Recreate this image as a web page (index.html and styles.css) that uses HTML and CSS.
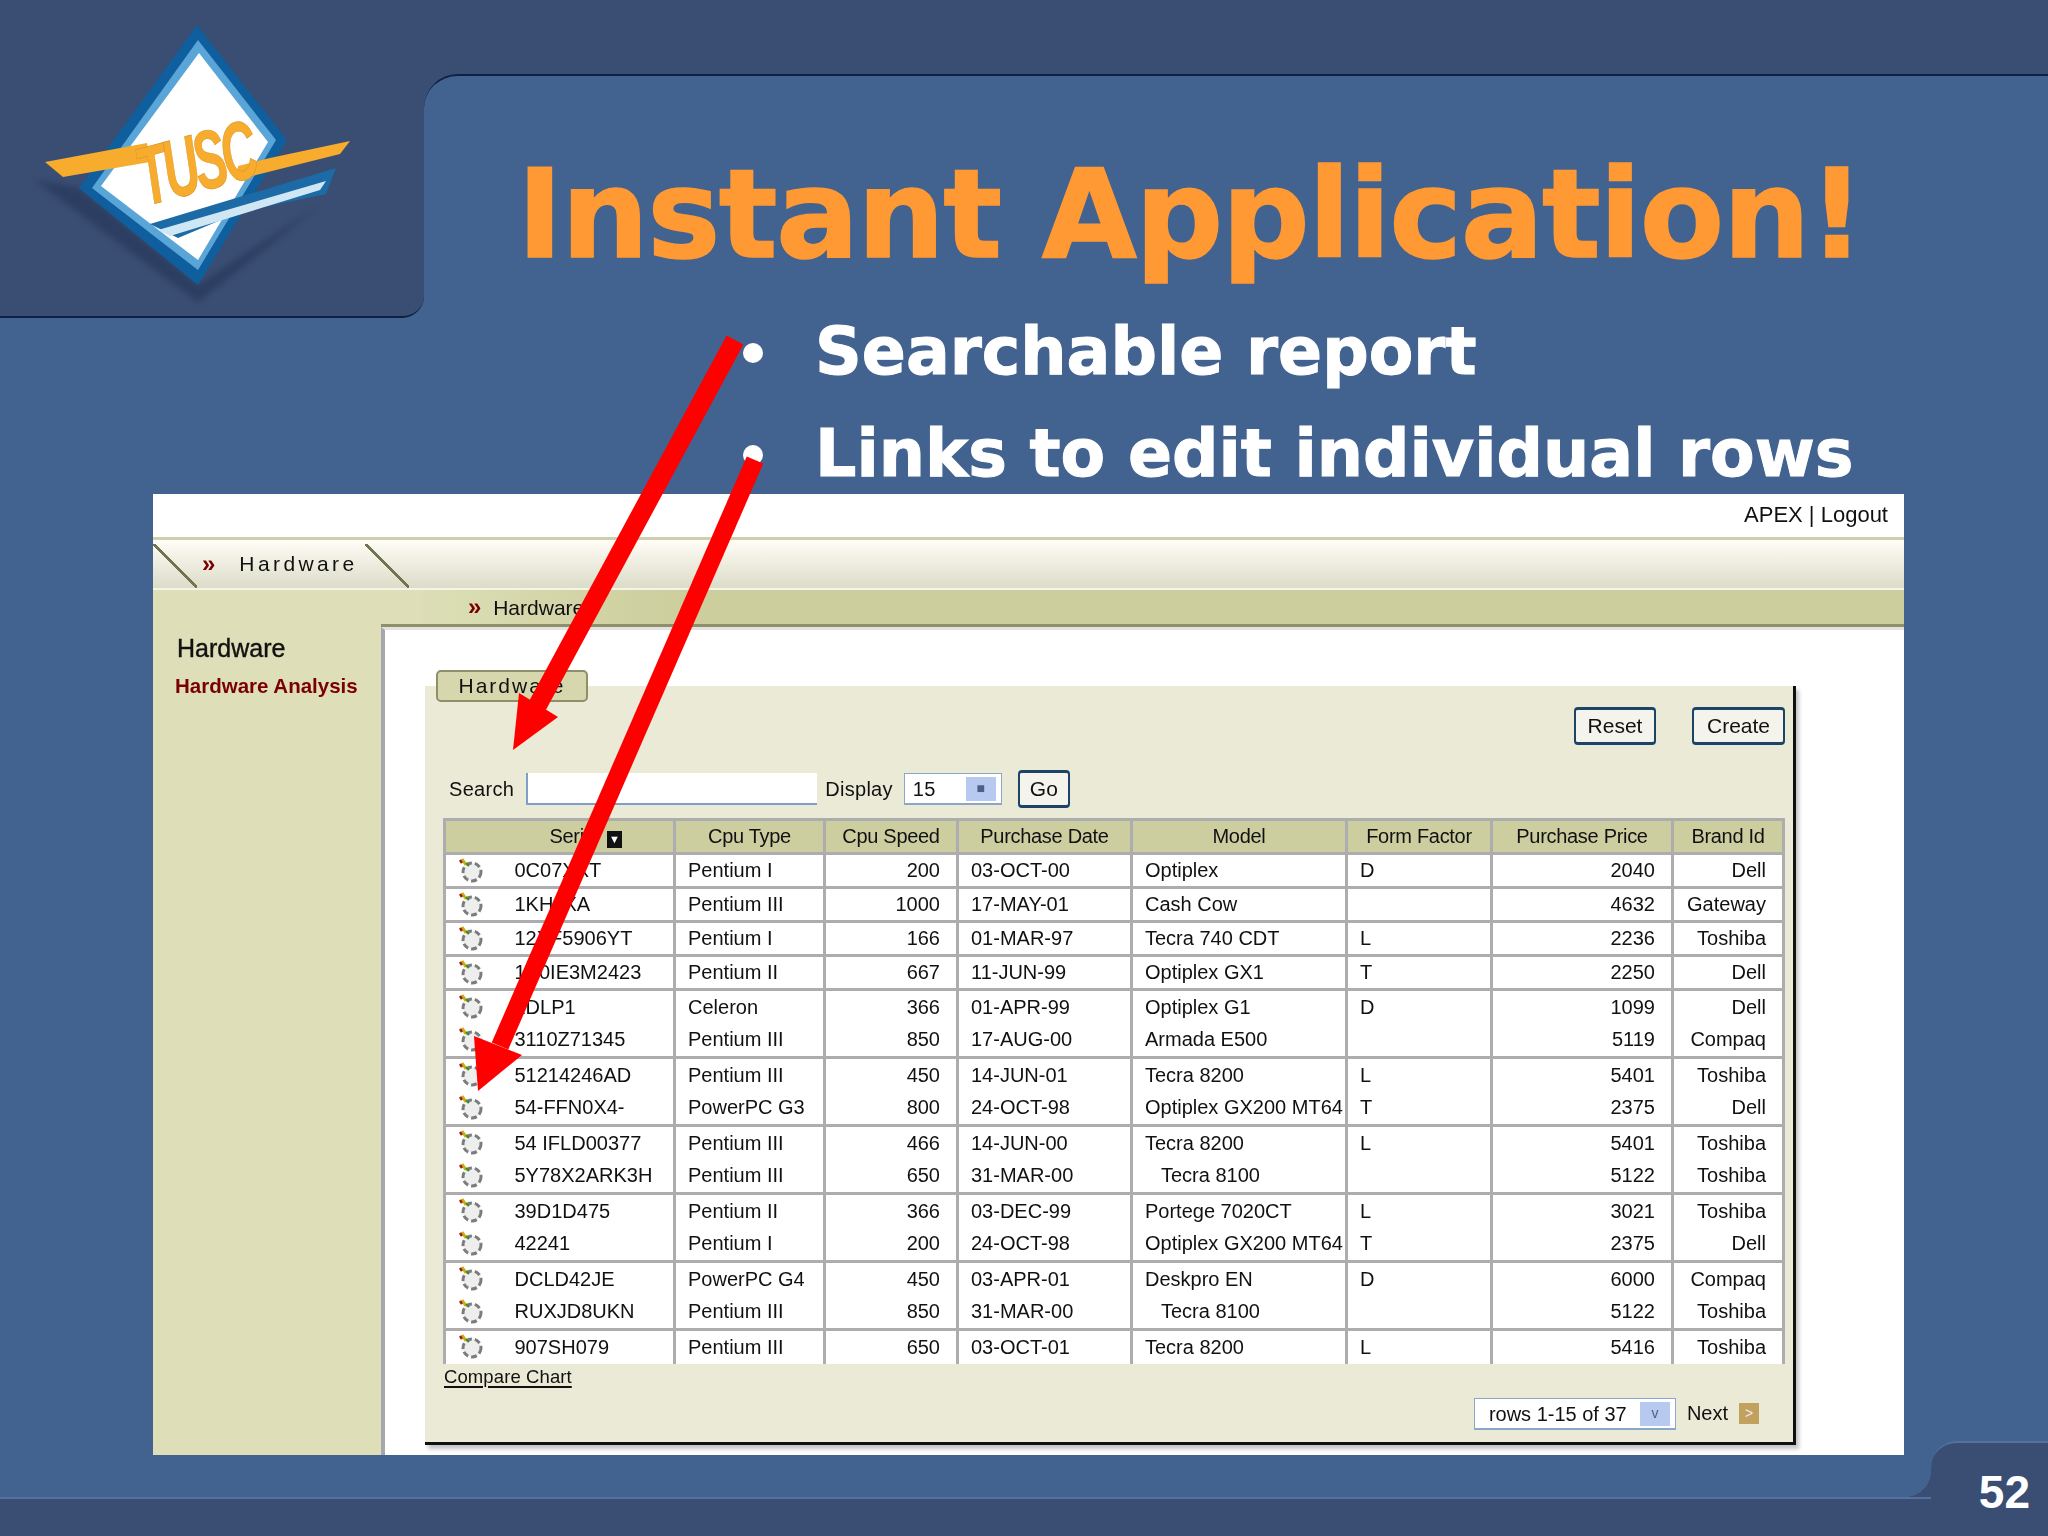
FILE: index.html
```html
<!DOCTYPE html>
<html>

<head>
    <title>Instant Application!</title>
    <link rel="stylesheet" href="styles.css">
</head>

<body>
    <svg class="defs" width="0" height="0">
        <symbol id="edit" viewBox="0 0 28 28">
            <circle cx="14" cy="15" r="9" fill="#eeeeee" stroke="#7c7c7c" stroke-width="3" stroke-dasharray="6 3" />
            <path d="M4 2l4 6" stroke="#c9b400" stroke-width="3" />
            <path d="M2 3l2 3" stroke="#a02020" stroke-width="2.5" />
            <path d="M8 6l3 3" stroke="#3c8a3c" stroke-width="2" />
        </symbol>
    </svg>

    <div class="slide">
        <header class="head">
            <div class="logo-tab">
                <svg class="logo" width="330" height="300" viewBox="30 10 330 300">
                    <path class="logo-shadow" d="M35 180L198 302 320 205 198 285 79 188z" fill="#26385a" />
                    <path d="M197 25L287 140 198 285 79 188z" fill="#0f5f9e" />
                    <path d="M198 40L276 140 198 270 92 188z" fill="#5aa5d8" />
                    <path d="M199 53L268 142 198 260 101 186z" fill="#fff" />
                    <path d="M150 224L336 168 326 194 240 212 178 238z" fill="#1c6aa6" />
                    <path d="M158 230L326 181 320 190 170 236z" fill="#cfe6f5" />
                    <path d="M45 162L147 143 150 162 63 177z" fill="#f7ac2d" />
                    <path d="M238 166L270 158 350 141 340 154 236 180z" fill="#f7ac2d" />
                    <text class="logo-text" transform="translate(146 206) rotate(-15) scale(.66 1.12)">TUSC</text>
                </svg>
            </div>
            <div class="head-right">
                <div class="title-panel">
                    <h1 class="title">Instant Application!</h1>
                </div>
            </div>
        </header>

        <ul class="points">
            <li>Searchable report</li>
            <li>Links to edit individual rows</li>
        </ul>

        <div class="app">
            <div class="app-user">APEX | Logout</div>
            <nav class="app-tabs">
                <span class="slash"></span>
                <span class="chev">&raquo;</span>
                <span class="app-tab">Hardware</span>
                <span class="slash"></span>
            </nav>
            <div class="app-body">
                <aside class="side">
                    <h3>Hardware</h3>
                    <a>Hardware Analysis</a>
                </aside>
                <div class="app-main">
                    <div class="crumb"><span class="chev">&raquo;</span> Hardware</div>
                    <div class="content">
                        <section class="panel">
                            <div class="panel-tab">Hardware</div>
                            <div class="actions">
                                <button class="btn">Reset</button>
                                <button class="btn btn-create">Create</button>
                            </div>
                            <div class="search">
                                <label>Search</label>
                                <span class="input"></span>
                                <label>Display</label>
                                <span class="select select-display">15<i class="drop">&#9632;</i></span>
                                <button class="btn btn-go">Go</button>
                            </div>
                            <table class="report">
                                <colgroup>
                                    <col class="c-icon">
                                    <col class="c-serial">
                                    <col class="c-type">
                                    <col class="c-speed">
                                    <col class="c-date">
                                    <col class="c-model">
                                    <col class="c-form">
                                    <col class="c-price">
                                    <col class="c-brand">
                                </colgroup>
                                <thead>
                                    <tr>
                                        <th colspan="2" class="serial-head">Serial <span class="sort">&#9660;</span></th>
                                        <th>Cpu Type</th>
                                        <th>Cpu Speed</th>
                                        <th>Purchase Date</th>
                                        <th>Model</th>
                                        <th>Form Factor</th>
                                        <th>Purchase Price</th>
                                        <th>Brand Id</th>
                                    </tr>
                                </thead>
                                <tbody>
                                    <tr><td><svg class="ico"><use href="#edit" /></svg></td><td>0C07XXT</td><td>Pentium I</td><td class="num">200</td><td>03-OCT-00</td><td>Optiplex</td><td>D</td><td class="num">2040</td><td class="num">Dell</td></tr>
                                    <tr><td><svg class="ico"><use href="#edit" /></svg></td><td>1KHJXA</td><td>Pentium III</td><td class="num">1000</td><td>17-MAY-01</td><td>Cash Cow</td><td></td><td class="num">4632</td><td class="num">Gateway</td></tr>
                                    <tr><td><svg class="ico"><use href="#edit" /></svg></td><td>12XF5906YT</td><td>Pentium I</td><td class="num">166</td><td>01-MAR-97</td><td>Tecra 740 CDT</td><td>L</td><td class="num">2236</td><td class="num">Toshiba</td></tr>
                                    <tr><td><svg class="ico"><use href="#edit" /></svg></td><td>1X0IE3M2423</td><td>Pentium II</td><td class="num">667</td><td>11-JUN-99</td><td>Optiplex GX1</td><td>T</td><td class="num">2250</td><td class="num">Dell</td></tr>
                                    <tr class="joined"><td><svg class="ico"><use href="#edit" /></svg></td><td>2DLP1</td><td>Celeron</td><td class="num">366</td><td>01-APR-99</td><td>Optiplex G1</td><td>D</td><td class="num">1099</td><td class="num">Dell</td></tr>
                                    <tr><td><svg class="ico"><use href="#edit" /></svg></td><td>3110Z71345</td><td>Pentium III</td><td class="num">850</td><td>17-AUG-00</td><td>Armada E500</td><td></td><td class="num">5119</td><td class="num">Compaq</td></tr>
                                    <tr class="joined"><td><svg class="ico"><use href="#edit" /></svg></td><td>51214246AD</td><td>Pentium III</td><td class="num">450</td><td>14-JUN-01</td><td>Tecra 8200</td><td>L</td><td class="num">5401</td><td class="num">Toshiba</td></tr>
                                    <tr><td><svg class="ico"><use href="#edit" /></svg></td><td>54-FFN0X4-</td><td>PowerPC G3</td><td class="num">800</td><td>24-OCT-98</td><td>Optiplex GX200 MT64</td><td>T</td><td class="num">2375</td><td class="num">Dell</td></tr>
                                    <tr class="joined"><td><svg class="ico"><use href="#edit" /></svg></td><td>54 IFLD00377</td><td>Pentium III</td><td class="num">466</td><td>14-JUN-00</td><td>Tecra 8200</td><td>L</td><td class="num">5401</td><td class="num">Toshiba</td></tr>
                                    <tr><td><svg class="ico"><use href="#edit" /></svg></td><td>5Y78X2ARK3H</td><td>Pentium III</td><td class="num">650</td><td>31-MAR-00</td><td class="indent">Tecra 8100</td><td></td><td class="num">5122</td><td class="num">Toshiba</td></tr>
                                    <tr class="joined"><td><svg class="ico"><use href="#edit" /></svg></td><td>39D1D475</td><td>Pentium II</td><td class="num">366</td><td>03-DEC-99</td><td>Portege 7020CT</td><td>L</td><td class="num">3021</td><td class="num">Toshiba</td></tr>
                                    <tr><td><svg class="ico"><use href="#edit" /></svg></td><td>42241</td><td>Pentium I</td><td class="num">200</td><td>24-OCT-98</td><td>Optiplex GX200 MT64</td><td>T</td><td class="num">2375</td><td class="num">Dell</td></tr>
                                    <tr class="joined"><td><svg class="ico"><use href="#edit" /></svg></td><td>DCLD42JE</td><td>PowerPC G4</td><td class="num">450</td><td>03-APR-01</td><td>Deskpro EN</td><td>D</td><td class="num">6000</td><td class="num">Compaq</td></tr>
                                    <tr><td><svg class="ico"><use href="#edit" /></svg></td><td>RUXJD8UKN</td><td>Pentium III</td><td class="num">850</td><td>31-MAR-00</td><td class="indent">Tecra 8100</td><td></td><td class="num">5122</td><td class="num">Toshiba</td></tr>
                                    <tr><td><svg class="ico"><use href="#edit" /></svg></td><td>907SH079</td><td>Pentium III</td><td class="num">650</td><td>03-OCT-01</td><td>Tecra 8200</td><td>L</td><td class="num">5416</td><td class="num">Toshiba</td></tr>
                                </tbody>
                            </table>
                            <a class="chart-link">Compare Chart</a>
                            <div class="pager">
                                <span class="select select-rows">rows 1-15 of 37<i class="drop">v</i></span>
                                <span class="next">Next</span>
                                <i class="next-ico">&gt;</i>
                            </div>
                        </section>
                    </div>
                </div>
            </div>
        </div>

        <footer class="foot">
            <div class="foot-left"></div>
            <div class="page-no">52</div>
        </footer>

        <!-- arrows lie over the slide text and the screenshot -->
        <svg class="arrows" width="2048" height="1536" viewBox="0 0 2048 1536">
            <path d="M735 340L534 712" stroke="#f00" stroke-width="19" />
            <path d="M513 750L558 717 519 693z" fill="#f00" />
            <path d="M755 460L500 1046" stroke="#f00" stroke-width="18" />
            <path d="M478 1091L522 1055 474 1036z" fill="#f00" />
        </svg>
    </div>
</body>

</html>
```

FILE: styles.css
```css
body {
    margin: 0;
    font-family: "DejaVu Sans", sans-serif;
    background: #426290;
}

.defs {
    display: block;
    height: 0;
}

.slide {
    position: relative;
    width: 2048px;
    height: 1536px;
    overflow: hidden;
    background-color: #426290;
}

.head {
    display: flex;
    height: 318px;
}

.logo-tab {
    flex: 0 0 424px;
    box-sizing: border-box;
    padding: 10px 0 0 30px;
    background-color: #3a4d72;
    border-bottom: 2px solid #0e2142;
    border-bottom-right-radius: 22px;
}

.logo {
    display: block;
}

.logo-shadow {
    opacity: .7;
    filter: blur(3px);
}

.logo-text {
    font-family: "Liberation Sans", sans-serif;
    font-size: 74px;
    font-style: italic;
    font-weight: bold;
    fill: #f7ac2d;
    stroke: #d8952a;
    stroke-width: .6;
    letter-spacing: -6px;
}

.head-right {
    flex: 1;
    background: linear-gradient(#3a4d72 110px, transparent 110px);
}

.title-panel {
    box-sizing: border-box;
    height: 244px;
    margin-top: 74px;
    padding: 77px 0 0 93px;
    background-color: #426290;
    border-top: 2px solid #0e2142;
    border-top-left-radius: 34px;
}

.title {
    margin: 0;
    font-size: 123px;
    line-height: 1;
    font-weight: bold;
    letter-spacing: -1.6px;
    color: #ff9933;
    -webkit-text-stroke: 1.5px #ff9933;
    white-space: nowrap;
}

.points {
    box-sizing: border-box;
    height: 193px;
    margin: -17px 0 0;
    padding: 0 0 0 815px;
    list-style: none;
    color: #fff;
    -webkit-text-stroke: 1px #fff;
    font-size: 65px;
    font-weight: bold;
    line-height: 102px;
}

.points li {
    position: relative;
    white-space: nowrap;
}

.points li::before {
    content: "";
    position: absolute;
    left: -72px;
    top: 42px;
    width: 20px;
    height: 20px;
    border-radius: 50%;
    background-color: #fff;
}

/* the screenshot inside the slide */
.app {
    box-sizing: border-box;
    width: 1751px;
    height: 961px;
    margin-left: 153px;
    background-color: #fff;
    color: #111;
    font-family: "Liberation Sans", sans-serif;
    font-size: 20px;
    filter: blur(.7px);
}

.app-user {
    height: 43px;
    line-height: 42px;
    padding-right: 16px;
    text-align: right;
    font-size: 22px;
}

.app-tabs {
    display: flex;
    align-items: center;
    height: 53px;
    border-top: 3px solid #cfcfae;
    box-sizing: border-box;
    background: linear-gradient(#fffdf6, #dcdcc9);
    border-bottom: 2px solid #f4f4e8;
}

.slash {
    width: 44px;
    height: 44px;
    margin-top: 4px;
    background: linear-gradient(to top right, transparent 48%, #6f7550 48%, #6f7550 53%, transparent 53%);
}

.chev {
    color: #7a0000;
    font-weight: bold;
    font-size: 24px;
}

.app-tabs .chev {
    margin: 0 24px 0 5px;
}

.app-tab {
    width: 126px;
    font-size: 21px;
    letter-spacing: 3.4px;
    white-space: nowrap;
}

.app-body {
    display: flex;
    height: 865px;
}

.side {
    flex: 0 0 228px;
    padding-top: 44px;
    background-color: #dedfb8;
}

.side h3 {
    margin: 0 0 12px 24px;
    font-size: 25px;
    font-weight: normal;
    line-height: 28px;
    -webkit-text-stroke: .4px #111;
}

.side a {
    display: block;
    margin-left: 22px;
    color: #7a0000;
    font-size: 20.5px;
    font-weight: bold;
    white-space: nowrap;
}

.app-main {
    flex: 1;
    min-width: 0;
    display: flex;
    flex-direction: column;
}

.crumb {
    box-sizing: border-box;
    height: 37px;
    padding-left: 87px;
    line-height: 34px;
    font-size: 21px;
    background: linear-gradient(90deg, #dedfb8 40px, #dcdeb5 42px, #ccce9e 300px);
    border-bottom: 3px solid #8f9068;
}

.crumb .chev {
    margin-right: 6px;
}

.content {
    flex: 1;
    padding: 56px 108px 10px 40px;
    border-left: 4px solid #a4a6b0;
    border-top: 3px solid #e2e2e2;
}

.panel {
    position: relative;
    box-sizing: border-box;
    height: 759px;
    padding: 0 12px 0 20px;
    background-color: #eaead6;
    border-right: 3px solid #111;
    border-bottom: 3px solid #111;
    box-shadow: 3px 4px 4px #c4c4c4;
}

.panel-tab {
    position: absolute;
    left: 11px;
    top: -16px;
    box-sizing: border-box;
    width: 152px;
    height: 32px;
    line-height: 28px;
    text-align: center;
    font-size: 21px;
    letter-spacing: 2px;
    background-color: #d6d7ad;
    border: 2px solid #8f9068;
    border-radius: 5px;
}

.actions {
    display: flex;
    justify-content: flex-end;
    gap: 36px;
    height: 84px;
    padding-top: 21px;
    box-sizing: border-box;
    margin-right: -4px;
}

.btn {
    height: 38px;
    width: 82px;
    padding: 0;
    font-family: inherit;
    font-size: 21px;
    color: #111;
    background-color: #f4f4ec;
    border: 2px solid #1c4468;
    border-top-width: 3px;
    border-bottom-width: 3px;
    border-radius: 4px;
}

.btn-create {
    width: 93px;
}

.btn-go {
    width: 52px;
    margin-left: 16px;
}

.search {
    display: flex;
    align-items: center;
    height: 38px;
    font-size: 20px;
    letter-spacing: .3px;
}

.search label {
    margin-left: 4px;
    margin-right: 12px;
}

.input {
    box-sizing: border-box;
    width: 291px;
    height: 32px;
    margin-right: 4px;
    background-color: #fff;
    border-bottom: 2px solid #7f9fc4;
    border-left: 2px solid #7f9fc4;
}

.select {
    position: relative;
    box-sizing: border-box;
    display: block;
    height: 32px;
    line-height: 30px;
    padding-left: 8px;
    background-color: #fff;
    border: 1px solid #8aa6c8;
    border-bottom-width: 2px;
}

.select-display {
    width: 98px;
    margin-left: -1px;
}

.select-rows {
    width: 202px;
    padding-left: 14px;
    white-space: nowrap;
}

.drop {
    position: absolute;
    right: 5px;
    top: 3px;
    width: 30px;
    height: 24px;
    line-height: 22px;
    text-align: center;
    font-style: normal;
    font-size: 14px;
    color: #4a5f8a;
    background-color: #b7c9ee;
}

.report {
    table-layout: fixed;
    width: 1339px;
    margin: 10px 0 0 -2px;
    border-collapse: collapse;
    background-color: #fff;
    font-size: 20px;
}

.c-icon { width: 70px; }
.c-serial { width: 160px; }
.c-type { width: 150px; }
.c-speed { width: 133px; }
.c-date { width: 174px; }
.c-model { width: 215px; }
.c-form { width: 145px; }
.c-price { width: 181px; }
.c-brand { width: 111px; }

.report th,
.report td {
    height: 34px;
    box-sizing: border-box;
    padding: 0 12px;
    border: 3px solid #adadb0;
    white-space: nowrap;
    overflow: hidden;
    font-weight: normal;
}

.report th {
    background-color: #cccea0;
    letter-spacing: -.3px;
}

.report th.serial-head {
    padding-left: 64px;
}

.report td:first-child {
    padding: 0 0 0 12px;
    border-right: 0;
}

.report td:nth-child(2) {
    padding-left: 0;
    border-left: 0;
}

.report tr.joined td {
    border-bottom: 0;
}

.report tr.joined + tr td {
    border-top: 0;
}

.report tbody tr:last-child td {
    border-bottom: 0;
}

.report td.num {
    text-align: right;
    padding-right: 16px;
}

.report td.indent {
    padding-left: 28px;
}

.ico {
    display: block;
    width: 28px;
    height: 28px;
}

.sort {
    display: inline-block;
    margin-left: 3px;
    padding: 1px 2px;
    font-size: 11px;
    line-height: 15px;
    color: #fff;
    background-color: #111;
}

.chart-link {
    display: block;
    line-height: 26px;
    text-decoration: underline;
    text-underline-offset: 3px;
    text-decoration-thickness: 2px;
    letter-spacing: .1px;
    font-size: 18.5px;
    margin-left: -1px;
}

.pager {
    display: flex;
    align-items: center;
    justify-content: flex-end;
    margin-top: 8px;
    padding-right: 22px;
}

.next {
    margin-left: 11px;
}

.next-ico {
    width: 20px;
    height: 21px;
    margin-left: 11px;
    line-height: 20px;
    text-align: center;
    font-size: 14px;
    font-style: normal;
    color: #eef;
    background-color: #c2a05e;
}

.foot {
    display: flex;
    height: 95px;
    margin-top: -14px;
}

.foot-left {
    position: relative;
    flex: 1;
    margin-top: 56px;
    background-color: #3a4d72;
    border-top: 2px solid #54709b;
}

.foot-left::before {
    content: "";
    position: absolute;
    right: 0;
    top: -28px;
    width: 26px;
    height: 26px;
    background: radial-gradient(circle at 0 0, transparent 26px, #3a4d72 26px);
}

.page-no {
    box-sizing: border-box;
    flex: 0 0 117px;
    padding: 22px 18px 0 0;
    text-align: right;
    color: #fff;
    font-family: "Liberation Sans", sans-serif;
    font-size: 46px;
    font-weight: bold;
    background-color: #3a4d72;
    border-top: 2px solid #54709b;
    border-top-left-radius: 26px;
}

.arrows {
    position: absolute;
    left: 0;
    top: 0;
    pointer-events: none;
}
```
